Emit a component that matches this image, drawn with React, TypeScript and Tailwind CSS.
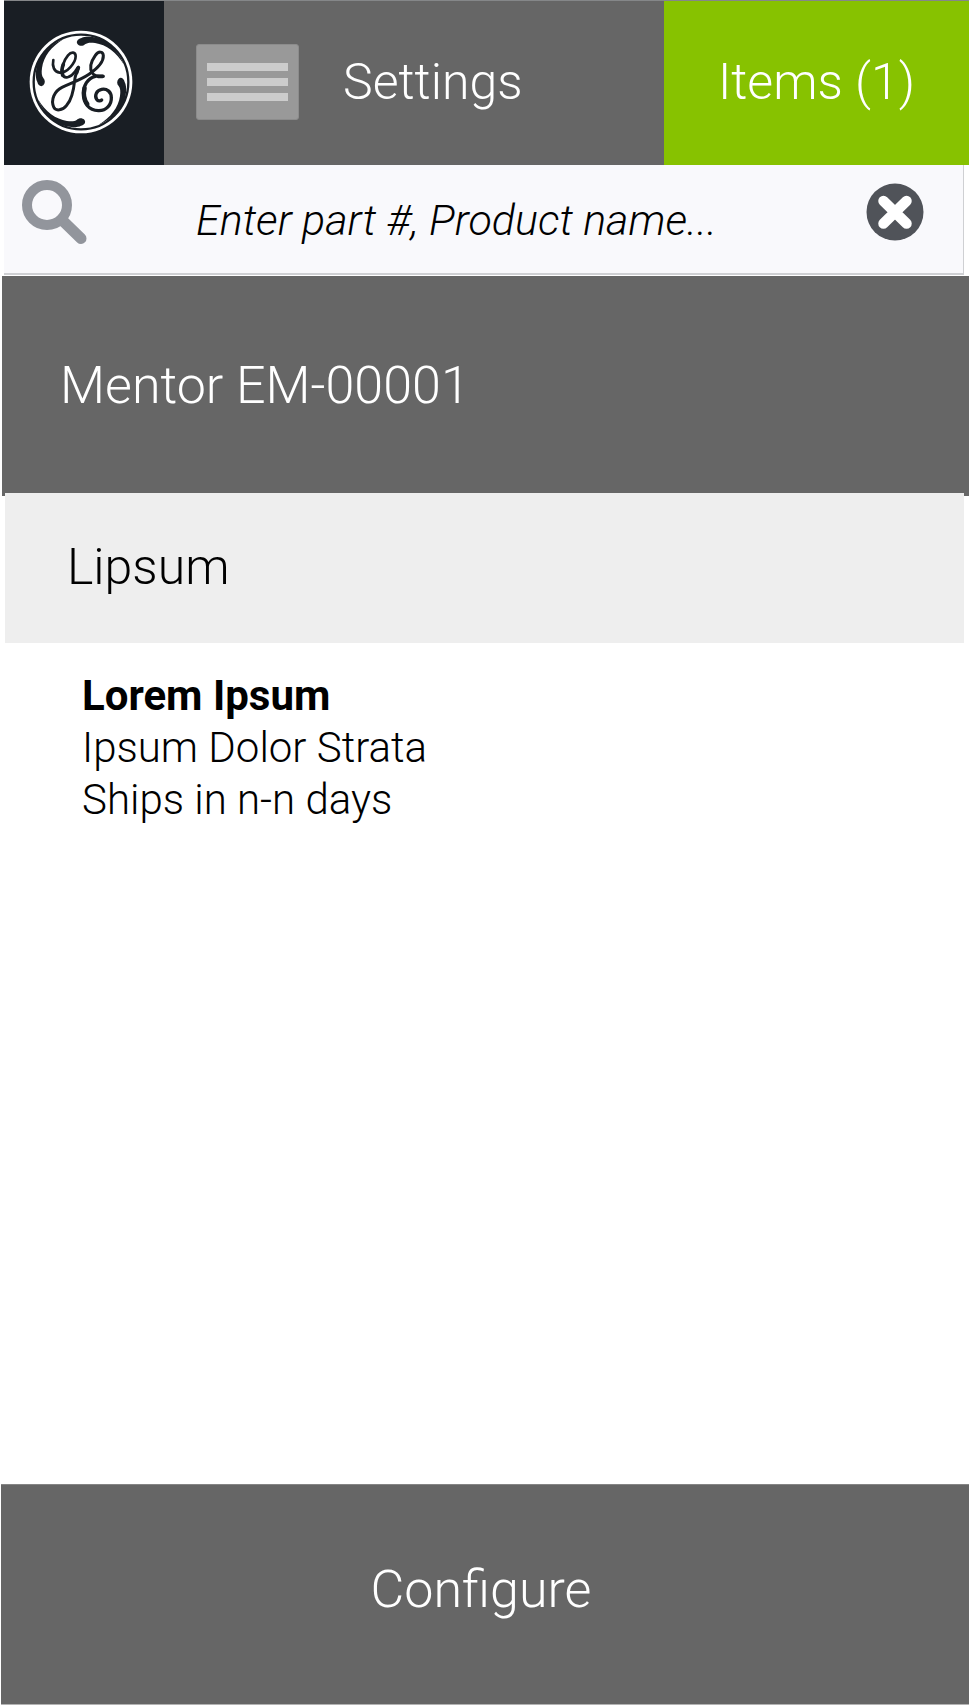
function Monogram() {
  return (
    <svg viewBox="0 0 312 312" className="size-[104px]" fill="none" aria-hidden="true">
      <circle cx="156" cy="156" r="154" fill="#fff" />
      <circle cx="156" cy="156" r="142" stroke="#191e24" strokeWidth="7" />
      <g fill="#191e24">
        {[0, 90, 180, 270].map((angle) => (
          <path
            key={angle}
            transform={`rotate(${angle} 156 156)`}
            d="M156 25C169 17 205 20 225 32C248 44 272 72 285 104C262 66 232 44 198 39C184 37 174 38 168 43C162 49 152 49 146 43C140 36 146 27 156 25Z"
          />
        ))}
      </g>
      <g stroke="#191e24" strokeLinecap="round" strokeLinejoin="round">
        <path
          strokeWidth="8"
          d="M73 90C69 108 75 126 92 128C114 130 140 98 140 79C140 65 127 64 117 76C104 91 96 116 100 132C105 149 125 143 137 126C142 119 145 114 148 111"
        />
        <path
          strokeWidth="9"
          d="M149 113C143 126 138 137 137 151C134 181 128 209 113 226C101 241 80 245 74 231C65 210 76 183 99 172C127 159 155 150 180 133C206 115 224 96 223 77C222 63 208 63 199 76C187 93 180 114 190 129C197 140 209 139 223 139"
        />
        <path
          strokeWidth="10"
          d="M199 139C176 145 163 166 163 190C163 219 179 241 208 242C232 243 248 224 247 203C247 185 233 175 218 178C202 181 196 197 203 208C207 214 214 214 218 210"
        />
      </g>
      <g stroke="#191e24" strokeLinecap="round">
        <path strokeWidth="11" d="M103 103C98 116 98 127 101 135M147 115L143 128M207 139H221" />
        <path strokeWidth="13" d="M167 174C163 190 166 210 175 222" />
      </g>
    </svg>
  );
}

function SearchIcon() {
  return (
    <svg viewBox="0 0 66 66" className="size-[66px]" fill="none" stroke="#92959c" role="img" aria-label="Search parts">
      <circle cx="25" cy="25" r="20" strokeWidth="10" />
      <path d="M40 40L59 58.5" strokeWidth="11" strokeLinecap="round" />
    </svg>
  );
}

function ClearIcon() {
  return (
    <svg viewBox="0 0 58 58" className="size-[58px]" aria-hidden="true">
      <circle cx="29" cy="29" r="28.5" fill="#505359" />
      <path d="M17.5 18L40.5 40.5M40.5 18L17.5 40.5" stroke="#fff" strokeWidth="10.5" strokeLinecap="round" />
    </svg>
  );
}

export default function App() {
  return (
    <div className="flex min-h-screen flex-col bg-white font-['Roboto',sans-serif] font-light text-black">
      <header className="ml-1 flex h-[165px] border-t border-[#858789] bg-[#666666] text-[50px] leading-[60px] text-white">
        <a href="#home" aria-label="GE home" className="flex w-40 shrink-0 items-center justify-center bg-[#191e24] pr-[6px] pb-[2px]">
          <Monogram />
        </a>
        <div className="flex flex-1 items-center gap-[44px] pb-[2px] pl-8">
          <button
            type="button"
            aria-label="Menu"
            className="flex h-[76px] w-[103px] flex-col items-center justify-center gap-[7px] rounded-[3px] border border-[#8c8c8c] bg-[#999999]"
          >
            <span className="h-2 w-[81px] bg-[#cccccc]" />
            <span className="h-2 w-[81px] bg-[#cccccc]" />
            <span className="h-2 w-[81px] bg-[#cccccc]" />
          </button>
          <h1>Settings</h1>
        </div>
        <button type="button" className="w-[305px] shrink-0 bg-[#87c200] pb-[2px]">
          Items (1)
        </button>
      </header>

      <form
        role="search"
        className="mr-[5px] ml-1 flex h-[110px] items-start border-r border-b-2 border-[#cfd0d3] bg-[#f9f9fc] pr-[39px] pl-[18px]"
        onSubmit={(event) => event.preventDefault()}
      >
        <label htmlFor="part-search" className="pt-[15px]">
          <SearchIcon />
        </label>
        <input
          id="part-search"
          type="text"
          placeholder="Enter part #, Product name..."
          className="ml-[108px] h-[110px] min-w-0 flex-1 bg-transparent text-[43px] italic outline-none placeholder:text-black placeholder:opacity-100"
        />
        <button type="reset" aria-label="Clear search" className="pt-[18px]">
          <ClearIcon />
        </button>
      </form>

      <main className="flex flex-1 flex-col">
        <div className="mt-px ml-[2px] flex h-[220px] items-center bg-[#666666] pl-[58px] text-[52px] leading-[60px] text-white">
          <h2>Mentor EM-00001</h2>
        </div>
        <section className="mx-[5px] -mt-[3px] flex h-[150px] items-center bg-[#eeeeee] pb-[2px] pl-[62px] text-[50px] leading-[60px]">
          <h3>Lipsum</h3>
        </section>
        <div className="px-[82px] pt-[27px] text-[42px] leading-[52px]">
          <p className="font-bold">Lorem Ipsum</p>
          <p>Ipsum Dolor Strata</p>
          <p>Ships in n-n days</p>
        </div>
      </main>

      <button
        type="button"
        className="ml-px h-[221px] border-y border-t-[#858585] border-b-[#b3b3b3] bg-[#666666] pr-[8px] pb-[10px] text-[52px] leading-[60px] text-white"
      >
        Configure
      </button>
    </div>
  );
}
